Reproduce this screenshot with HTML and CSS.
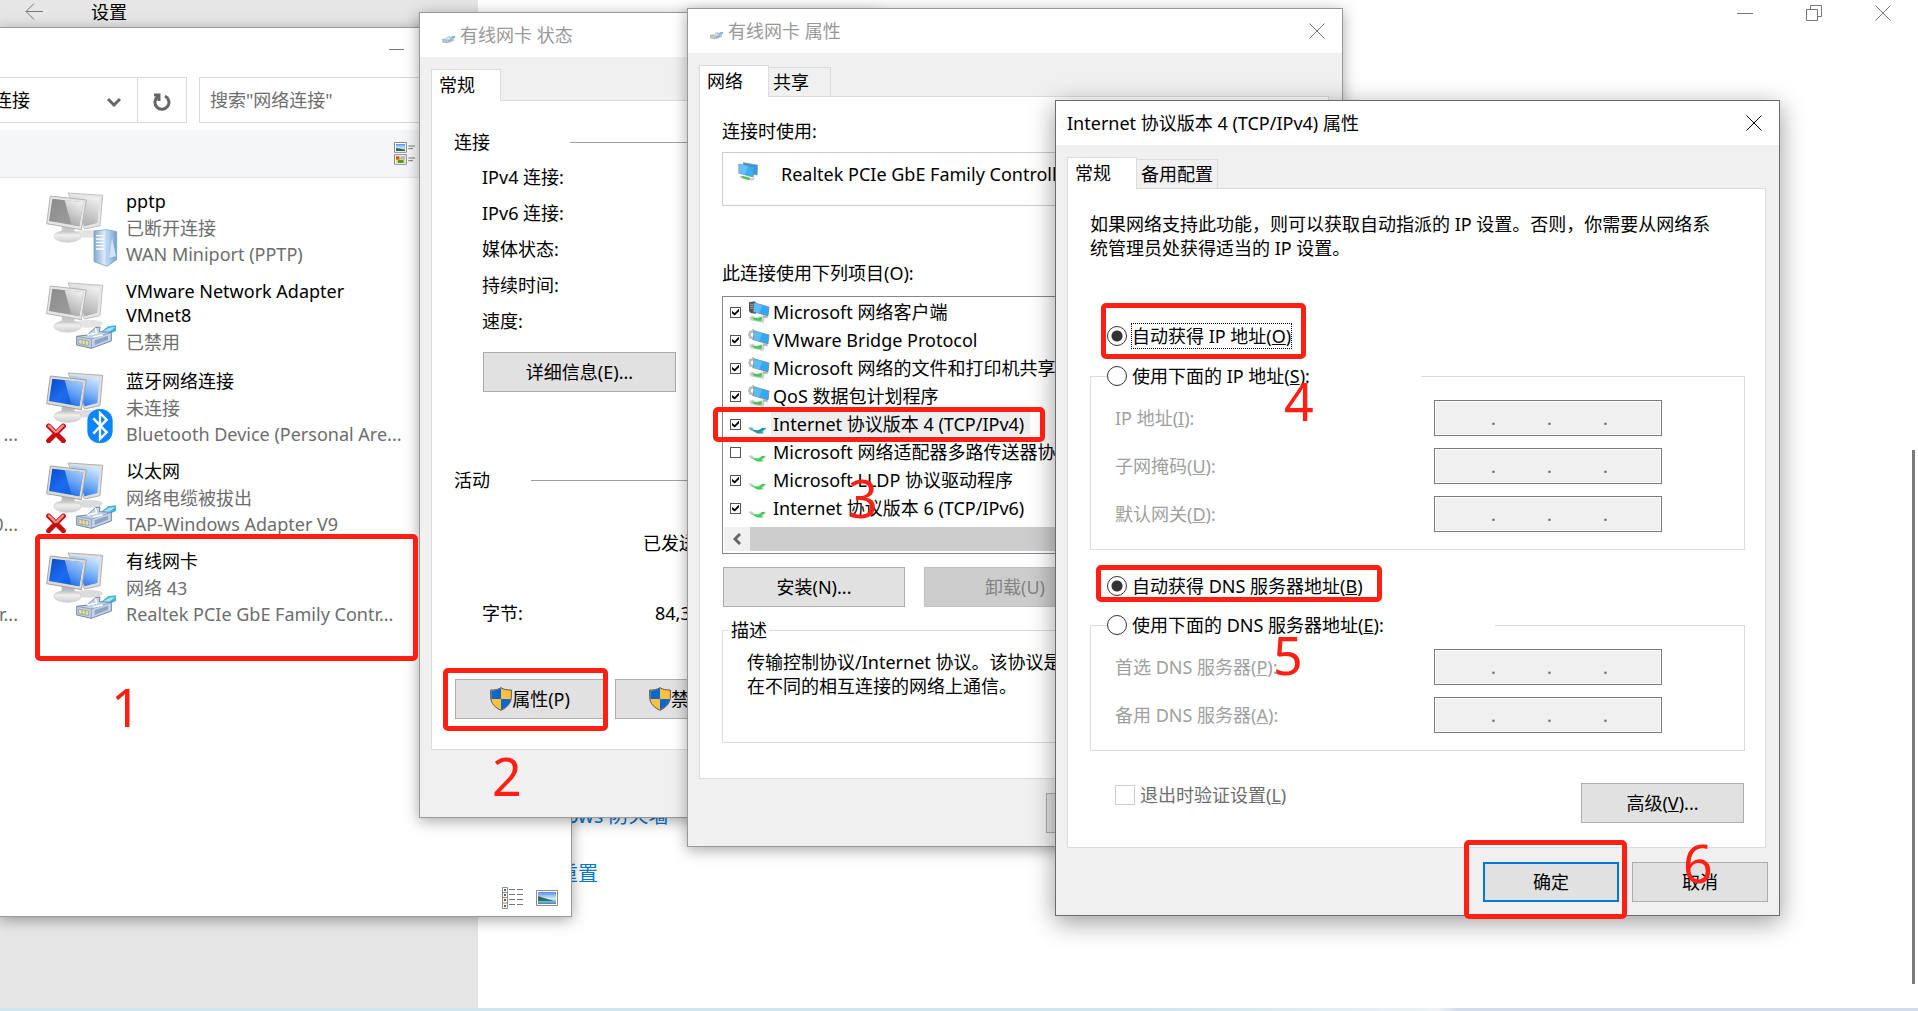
FILE: index.html
```html
<!DOCTYPE html>
<html lang="zh-CN">
  <head>
    <meta charset="UTF-8" />
    <meta name="viewport" content="width=device-width, initial-scale=1.0" />
    <title>设置</title>
    <link rel="stylesheet" href="styles.css">
  </head>
  <body>
    <!-- shared icons -->
    <svg class="sprite" width="0" height="0" aria-hidden="true">
      <defs>
        <linearGradient id="blue-screen" x1="0" y1="0" x2="1" y2="1">
          <stop offset="0" stop-color="#0a49c8" />
          <stop offset="0.5" stop-color="#1c6cf0" />
          <stop offset="1" stop-color="#0a50d0" />
        </linearGradient>
        <linearGradient id="blue-glare" x1="0.7" y1="0" x2="0.3" y2="1">
          <stop offset="0" stop-color="#d3e8fd" />
          <stop offset="0.5" stop-color="#7db4f8" />
          <stop offset="1" stop-color="#1f6cf0" />
        </linearGradient>
        <linearGradient id="gray-screen" x1="0" y1="0" x2="1" y2="1">
          <stop offset="0" stop-color="#8c8c8c" />
          <stop offset="1" stop-color="#a0a0a0" />
        </linearGradient>
        <linearGradient id="gray-glare" x1="0.7" y1="0" x2="0.3" y2="1">
          <stop offset="0" stop-color="#f0f0f0" />
          <stop offset="1" stop-color="#a6a6a6" />
        </linearGradient>
        <linearGradient id="metal" x1="0" y1="0" x2="0" y2="1">
          <stop offset="0" stop-color="#b9b9b9" />
          <stop offset="0.4" stop-color="#efefef" />
          <stop offset="1" stop-color="#cdcdcd" />
        </linearGradient>
        <linearGradient id="tower" x1="0" y1="0" x2="1" y2="0">
          <stop offset="0" stop-color="#7fa9d3" />
          <stop offset="0.45" stop-color="#d9eafa" />
          <stop offset="1" stop-color="#6f9fce" />
        </linearGradient>
        <linearGradient id="sky" x1="0" y1="0" x2="0" y2="1">
          <stop offset="0" stop-color="#4f8ff0" />
          <stop offset="0.55" stop-color="#d4e9fb" />
          <stop offset="1" stop-color="#3d86b8" />
        </linearGradient>
      </defs>

      <symbol id="pc-blue" viewBox="0 0 216 228">
        <ellipse cx="128" cy="128" rx="42" ry="12" fill="#dcdcdc" />
        <path d="M66 6 170 13 162 104 116 114Z" fill="#dedede" stroke="#b0b0b0" stroke-width="3" />
        <path d="M74 14 161 20 154 96 116 106Z" fill="url(#blue-glare)" />
        <path d="M48 106 86 112 84 128H46Z" fill="#b9b9b9" />
        <ellipse cx="65" cy="136" rx="41" ry="18" fill="url(#metal)" stroke="#c6c6c6" stroke-width="2" />
        <path d="M13 15 121 27 106 116 2 98Z" fill="#dcdcd6" stroke="#a2a29e" stroke-width="3" />
        <path d="M19 23 112 34 100 106 9 90Z" fill="url(#blue-screen)" />
        <path d="M56 27 112 34 100 106 76 101Z" fill="url(#blue-glare)" opacity=".75" />
      </symbol>
      <symbol id="pc-gray" viewBox="0 0 216 228">
        <ellipse cx="128" cy="128" rx="42" ry="12" fill="#e4e4e4" />
        <path d="M66 6 170 13 162 104 116 114Z" fill="#e6e6e6" stroke="#c0c0c0" stroke-width="3" />
        <path d="M74 14 161 20 154 96 116 106Z" fill="url(#gray-glare)" />
        <path d="M48 106 86 112 84 128H46Z" fill="#c6c6c6" />
        <ellipse cx="65" cy="136" rx="41" ry="18" fill="url(#metal)" stroke="#d2d2d2" stroke-width="2" />
        <path d="M13 15 121 27 106 116 2 98Z" fill="#e6e6e6" stroke="#b4b4b4" stroke-width="3" />
        <path d="M19 23 112 34 100 106 9 90Z" fill="url(#gray-screen)" />
        <path d="M56 27 112 34 100 106 76 101Z" fill="url(#gray-glare)" />
      </symbol>
      <symbol id="plug" viewBox="0 0 120 72">
        <path d="M74 22 96 4 120 1V18L92 30Z" fill="#43b1d8" />
        <path d="M80 20 100 8 118 6 98 22Z" fill="#a5e4f5" />
        <path d="M2 34 34 30 58 8 72 6 70 20 106 22V48L46 70 2 60Z" fill="#c3d2e6" stroke="#7287a8" stroke-width="3" />
        <path d="M2 34 46 42 106 22M46 42V70" fill="none" stroke="#7287a8" stroke-width="2" />
        <path d="M34 30 62 24 58 10M52 36 80 30" fill="none" stroke="#fff" stroke-width="4" />
        <path d="M56 46 96 32V44L56 60Z" fill="#8fa3c4" />
        <path d="M8 42 38 48V62L8 56Z" fill="#e3e0a4" stroke="#8b92a0" stroke-width="2" />
        <path d="M18 44V58M28 46V60" stroke="#9c9a55" stroke-width="2" />
      </symbol>
      <symbol id="red-x" viewBox="0 0 60 60">
        <path d="M8 8 52 52M52 8 8 52" stroke="#c80c12" stroke-width="15" stroke-linecap="round" />
        <path d="M9 7 28 26M51 7 33 25" stroke="#f48e8e" stroke-width="7" stroke-linecap="round" />
      </symbol>
      <symbol id="shield" viewBox="0 0 66 72">
        <path d="M33 2C25 8 14 9 2 9V32C3 50 16 62 33 70 50 62 63 50 64 32V9C52 9 41 8 33 2Z" fill="#ffc03c" stroke="#57575a" stroke-width="3" />
        <path d="M33 4C25 9 15 11 4 11V36H33ZM33 36H62C59 52 48 62 33 68Z" fill="#0b66cd" />
      </symbol>
      <symbol id="cable" viewBox="0 0 54 26">
        <path d="M0 5 12 3 18 10 10 14ZM38 12 54 3V9L46 14V24L36 20Z" fill="#cfd2d4" />
        <path d="M8 10 30 12 44 5 52 7 40 16 42 22 28 22Z" fill="#39cb4c" />
        <path d="M12 11 30 15 40 10" fill="none" stroke="#8cea94" stroke-width="2" />
      </symbol>
      <symbol id="cable-on" viewBox="0 0 54 26">
        <path d="M0 5 12 3 18 10 10 14ZM38 12 54 3V9L46 14V24L36 20Z" fill="#6daee0" />
        <path d="M8 10 30 12 44 5 52 7 40 16 42 22 28 22Z" fill="#1d9a97" />
      </symbol>
      <symbol id="monitor-sm" viewBox="0 0 66 66">
        <path d="M44 42 58 46 60 52 44 50Z" fill="#b4b8ba" />
        <path d="M18 5 63 18 60 45 16 32Z" fill="#35a8f4" stroke="#6c7b87" stroke-width="2" />
        <path d="M19 6 42 13 34 37 17 32Z" fill="#5dbdf8" />
        <path d="M4 48 14 44 24 50 40 46 50 54 46 66 8 58Z" fill="#c9cdd0" />
        <path d="M12 50 30 52 42 48 40 60 20 58Z" fill="#3ccc4a" />
      </symbol>
      <symbol id="client" viewBox="0 0 66 66">
        <path d="M3 4 20 1 24 5V38L8 36 3 30Z" fill="#4f5357" />
        <path d="M6 10H16M6 16H16M6 22H16" stroke="#c6cacc" stroke-width="2" />
        <use href="#monitor-sm" width="66" height="66" />
      </symbol>
      <symbol id="service" viewBox="0 0 66 66">
        <circle cx="15" cy="17" r="10" fill="none" stroke="#b5bdc4" stroke-width="7" />
        <path d="M15 0V8M15 26V34M0 17H6M4 6 8 10M4 29 8 25" stroke="#b5bdc4" stroke-width="5" />
        <use href="#monitor-sm" width="66" height="66" />
      </symbol>
      <symbol id="adapter" viewBox="0 0 60 58">
        <path d="M16 2 60 10 58 40 16 30Z" fill="#2e9dec" stroke="#77838d" stroke-width="2" />
        <path d="M2 6 48 16 46 46 2 34Z" fill="#3aaef8" stroke="#77838d" stroke-width="2" />
        <path d="M3 7 30 13 20 38 3 33Z" fill="#66c2fa" />
        <path d="M4 42 20 44 40 50 50 48 48 56 30 56 6 48Z" fill="#c4c8ca" />
        <path d="M10 42 36 48 36 55 14 50Z" fill="#41c94c" />
      </symbol>
    </svg>

    <main class="desktop">
      <!-- settings app behind everything -->
      <section class="settings">
        <aside class="settings-side">
          <button class="back" aria-label="返回">
            <svg width="18" height="17" viewBox="0 0 18 17"><path d="M9 0.5 1 8.5 9 16.5M1 8.5H18" /></svg>
          </button>
          <span>设置</span>
        </aside>
        <div class="settings-main">
          <div class="settings-controls">
            <button aria-label="最小化"><svg width="16" height="16" viewBox="0 0 16 16"><path d="M0 8.5H16" /></svg></button>
            <button aria-label="还原"><svg width="16" height="16" viewBox="0 0 16 16"><path d="M.5 4.5H11.5V15.5H.5ZM4.5 4.5V.5H15.5V11.5H11.5" /></svg></button>
            <button aria-label="关闭"><svg width="16" height="16" viewBox="0 0 16 16"><path d="M.5.5 15.5 15.5M15.5.5.5 15.5" /></svg></button>
          </div>
          <nav class="settings-links">
            <a href="#">Windows 防火墙</a>
            <a href="#">网络重置</a>
          </nav>
        </div>
        <div class="settings-scroll"></div>
      </section>
      <div class="taskbar-edge"></div>

      <!-- network connections -->
      <section class="window connections">
        <header class="connections-title">
          <button aria-label="最小化"><svg width="16" height="16" viewBox="0 0 16 16"><path d="M0 7.5H15" /></svg></button>
        </header>
        <div class="address-row">
          <div class="address">
            <span class="address-text">连接</span>
            <button aria-label="展开"><svg width="14" height="10" viewBox="0 0 14 10"><path class="thick" d="M1 2 7 8 13 2" /></svg></button>
            <button class="refresh" aria-label="刷新">
              <svg width="18" height="18" viewBox="0 0 18 18"><path class="thick" d="M12 3A7 7 0 1 1 5 3.500M1 2H6V8" /></svg>
            </button>
          </div>
          <input class="search" type="text" aria-label="搜索" placeholder='搜索"网络连接"' />
        </div>
        <div class="toolbar">
          <button aria-label="更改视图">
            <svg width="21" height="23" viewBox="0 0 63 69">
              <path d="M1.500 1.500H37V31H1.500ZM1.500 38H37V67H1.500Z" fill="#fff" stroke="#888" stroke-width="3" />
              <path d="M6 6H33V27H6Z" fill="url(#sky)" /><path d="M6 18 20 20 33 24V27H6Z" fill="#2d6a5e" />
              <path d="M6 43H33V63H6Z" fill="#f3d65a" /><path d="M6 43H16V53H6Z" fill="#d8502f" /><path d="M12 54H28V63H12Z" fill="#4b9a3c" /><path d="M20 43H33V52H20Z" fill="#9cb9f0" />
              <path d="M43 12H63M43 20H57M43 48H63M43 56H57" stroke="#777" stroke-width="3" />
            </svg>
          </button>
        </div>
        <div class="connection-columns">
          <ul class="previous-column">
            <li></li>
            <li></li>
            <li>...</li>
            <li>0...</li>
            <li>r...</li>
          </ul>
          <ul class="connection-list">
            <li>
              <svg class="pc" viewBox="0 0 216 228">
                <use href="#pc-gray" />
                <path d="M144 120 182 116 212 122V206L184 226 144 212Z" fill="url(#tower)" stroke="#6d97c2" stroke-width="2" />
                <path d="M182 118V224" stroke="#a9c8e6" stroke-width="2" />
                <path d="M150 134H174M150 144H174M150 154H174M150 164H174M150 174H174" stroke="#fff" stroke-width="4" />
                <path d="M190 200 198 140 210 196Z" fill="#cfe4f8" />
              </svg>
              <div>
                <strong>pptp</strong>
                <span>已断开连接</span>
                <span>WAN Miniport (PPTP)</span>
              </div>
            </li>
            <li>
              <svg class="pc" viewBox="0 0 216 228">
                <use href="#pc-gray" />
                <use href="#plug" x="90" y="132" width="120" height="72" />
              </svg>
              <div>
                <strong>VMware Network Adapter VMnet8</strong>
                <span>已禁用</span>
              </div>
            </li>
            <li>
              <svg class="pc" viewBox="0 0 216 228">
                <use href="#pc-blue" />
                <use href="#red-x" y="157" width="60" height="60" />
                <rect x="124" y="114" width="76" height="102" rx="36" fill="#0a84ff" />
                <path d="M142 142 182 184 162 204V126L182 146 142 188" fill="none" stroke="#fff" stroke-width="7" />
              </svg>
              <div>
                <strong>蓝牙网络连接</strong>
                <span>未连接</span>
                <span>Bluetooth Device (Personal Are...</span>
              </div>
            </li>
            <li>
              <svg class="pc" viewBox="0 0 216 228">
                <use href="#pc-blue" />
                <use href="#red-x" y="157" width="60" height="60" />
                <use href="#plug" x="90" y="132" width="120" height="72" />
              </svg>
              <div>
                <strong>以太网</strong>
                <span>网络电缆被拔出</span>
                <span>TAP-Windows Adapter V9</span>
              </div>
            </li>
            <li>
              <svg class="pc" viewBox="0 0 216 228">
                <use href="#pc-blue" />
                <use href="#plug" x="90" y="132" width="120" height="72" />
              </svg>
              <div>
                <strong>有线网卡</strong>
                <span>网络 43</span>
                <span>Realtek PCIe GbE Family Contr...</span>
              </div>
            </li>
          </ul>
        </div>
        <footer class="view-switch">
          <button aria-label="详细信息">
            <svg width="22" height="22" viewBox="0 0 22 22">
              <path d="M.5.5H5.500V21.500H.5ZM.5 5.500H5.500M.5 10.500H5.500M.5 16H5.500" fill="#fff" stroke="#8a8a8a" />
              <path d="M2 2H4V4H2ZM2 7H4V9H2ZM2 18H4V20H2Z" fill="#4b6b62" /><path d="M2 12H4V14H2Z" fill="#c0392b" />
              <path d="M7 2.500H13M15 2.500H21M7 7.500H13M15 7.500H21M7 12.500H13M15 12.500H21M7 17.500H13M15 17.500H21" stroke="#777" />
            </svg>
          </button>
          <button aria-label="大图标">
            <svg width="22" height="16" viewBox="0 0 22 16">
              <path d="M.5.5H21.500V15.500H.5Z" fill="#fff" stroke="#8a8a8a" />
              <path d="M2 2H20V14H2Z" fill="url(#sky)" /><path d="M2 6 8 8 18 11H2Z" fill="#2f6f57" />
            </svg>
          </button>
        </footer>
      </section>

      <!-- adapter status -->
      <section class="window dialog status">
        <header class="dialog-title">
          <svg class="title-icon" viewBox="0 0 120 72"><use href="#plug" /></svg>
          <h2>有线网卡 状态</h2>
        </header>
        <div class="tabs"><button class="tab active">常规</button></div>
        <div class="panel">
          <h3 class="section-line wide">连接</h3>
          <ul class="status-list">
            <li>IPv4 连接:</li>
            <li>IPv6 连接:</li>
            <li>媒体状态:</li>
            <li>持续时间:</li>
            <li>速度:</li>
          </ul>
          <button class="btn details">详细信息(E)...</button>
          <h3 class="section-line activity">活动</h3>
          <div class="sent">已发送</div>
          <div class="bytes"><span>字节:</span><span>84,356</span></div>
          <div class="status-buttons">
            <button class="btn"><svg width="22" height="24"><use href="#shield" /></svg>属性(P)</button>
            <button class="btn"><svg width="22" height="24"><use href="#shield" /></svg>禁用(D)</button>
          </div>
        </div>
        <footer class="dialog-footer"><button class="btn">关闭(C)</button></footer>
      </section>

      <!-- adapter properties -->
      <section class="window dialog properties">
        <header class="dialog-title">
          <svg class="title-icon" viewBox="0 0 120 72"><use href="#plug" /></svg>
          <h2>有线网卡 属性</h2>
          <button class="close" aria-label="关闭"><svg width="16" height="16" viewBox="0 0 16 16"><path d="M.5.5 15.5 15.5M15.5.5.5 15.5" /></svg></button>
        </header>
        <div class="tabs">
          <button class="tab active">网络</button>
          <button class="tab">共享</button>
        </div>
        <div class="panel">
          <p>连接时使用:</p>
          <div class="adapter-box">
            <svg width="20" height="19" viewBox="0 0 60 58"><use href="#adapter" /></svg>
            <span>Realtek PCIe GbE Family Controller</span>
          </div>
          <p>此连接使用下列项目(O):</p>
          <div class="item-list">
            <label><input type="checkbox" checked /><svg><use href="#client" /></svg><span>Microsoft 网络客户端</span></label>
            <label><input type="checkbox" checked /><svg><use href="#service" /></svg><span>VMware Bridge Protocol</span></label>
            <label><input type="checkbox" checked /><svg><use href="#service" /></svg><span>Microsoft 网络的文件和打印机共享</span></label>
            <label><input type="checkbox" checked /><svg><use href="#service" /></svg><span>QoS 数据包计划程序</span></label>
            <label><input type="checkbox" checked /><svg class="proto"><use href="#cable-on" /></svg><span class="selected">Internet 协议版本 4 (TCP/IPv4)</span></label>
            <label><input type="checkbox" /><svg class="proto"><use href="#cable" /></svg><span>Microsoft 网络适配器多路传送器协议</span></label>
            <label><input type="checkbox" checked /><svg class="proto"><use href="#cable" /></svg><span>Microsoft LLDP 协议驱动程序</span></label>
            <label><input type="checkbox" checked /><svg class="proto"><use href="#cable" /></svg><span>Internet 协议版本 6 (TCP/IPv6)</span></label>
            <div class="h-scroll">
              <button aria-label="向左滚动"><svg width="8" height="12" viewBox="0 0 8 12"><path class="thick" d="M7 1 2 6 7 11" /></svg></button>
              <div class="h-thumb"></div>
            </div>
          </div>
          <div class="item-buttons">
            <button class="btn">安装(N)...</button>
            <button class="btn" disabled>卸载(U)</button>
          </div>
          <fieldset class="description">
            <legend>描述</legend>
            <p>传输控制协议/Internet 协议。该协议是<br />在不同的相互连接的网络上通信。</p>
          </fieldset>
        </div>
        <footer class="dialog-footer">
          <button class="btn">确定</button>
          <button class="btn">取消</button>
        </footer>
      </section>

      <!-- ipv4 properties -->
      <section class="window dialog ipv4">
        <header class="dialog-title">
          <h2>Internet 协议版本 4 (TCP/IPv4) 属性</h2>
          <button class="close" aria-label="关闭"><svg width="16" height="16" viewBox="0 0 16 16"><path d="M.5.5 15.5 15.5M15.5.5.5 15.5" /></svg></button>
        </header>
        <div class="tabs">
          <button class="tab active">常规</button>
          <button class="tab">备用配置</button>
        </div>
        <div class="panel">
          <p>如果网络支持此功能，则可以获取自动指派的 IP 设置。否则，你需要从网络系<br />统管理员处获得适当的 IP 设置。</p>
          <label class="radio first"><input type="radio" name="ip" checked /><span class="focused">自动获得 IP 地址(<u>O</u>)</span></label>
          <fieldset class="group">
            <legend class="ip-legend"><label class="radio"><input type="radio" name="ip" /><span>使用下面的 IP 地址(<u>S</u>):</span></label></legend>
            <div class="field-row">
              <label for="ip-1">IP 地址(<u>I</u>):</label>
              <div class="ip-field"><input id="ip-1" disabled /><i>.</i><input aria-label="IP 2" disabled /><i>.</i><input aria-label="IP 3" disabled /><i>.</i><input aria-label="IP 4" disabled /></div>
            </div>
            <div class="field-row">
              <label for="mask-1">子网掩码(<u>U</u>):</label>
              <div class="ip-field"><input id="mask-1" disabled /><i>.</i><input aria-label="掩码 2" disabled /><i>.</i><input aria-label="掩码 3" disabled /><i>.</i><input aria-label="掩码 4" disabled /></div>
            </div>
            <div class="field-row">
              <label for="gateway-1">默认网关(<u>D</u>):</label>
              <div class="ip-field"><input id="gateway-1" disabled /><i>.</i><input aria-label="网关 2" disabled /><i>.</i><input aria-label="网关 3" disabled /><i>.</i><input aria-label="网关 4" disabled /></div>
            </div>
          </fieldset>
          <label class="radio second"><input type="radio" name="dns" checked /><span>自动获得 DNS 服务器地址(<u>B</u>)</span></label>
          <fieldset class="group">
            <legend class="dns-legend"><label class="radio"><input type="radio" name="dns" /><span>使用下面的 DNS 服务器地址(<u>E</u>):</span></label></legend>
            <div class="field-row">
              <label for="dns-1">首选 DNS 服务器(<u>P</u>):</label>
              <div class="ip-field"><input id="dns-1" disabled /><i>.</i><input aria-label="首选 2" disabled /><i>.</i><input aria-label="首选 3" disabled /><i>.</i><input aria-label="首选 4" disabled /></div>
            </div>
            <div class="field-row">
              <label for="alt-1">备用 DNS 服务器(<u>A</u>):</label>
              <div class="ip-field"><input id="alt-1" disabled /><i>.</i><input aria-label="备用 2" disabled /><i>.</i><input aria-label="备用 3" disabled /><i>.</i><input aria-label="备用 4" disabled /></div>
            </div>
          </fieldset>
          <div class="advanced-row">
            <label class="validate"><input type="checkbox" disabled />退出时验证设置(<u>L</u>)</label>
            <button class="btn advanced">高级(<u>V</u>)...</button>
          </div>
        </div>
        <footer class="dialog-footer">
          <button class="btn primary">确定</button>
          <button class="btn">取消</button>
        </footer>
      </section>

      <!-- step markers -->
      <div class="mark mark-1"></div>
      <div class="mark mark-2"></div>
      <div class="mark mark-3"></div>
      <div class="mark mark-4"></div>
      <div class="mark mark-5"></div>
      <div class="mark mark-6"></div>
      <span class="step step-1">1</span>
      <span class="step step-2">2</span>
      <span class="step step-3">3</span>
      <span class="step step-4">4</span>
      <span class="step step-5">5</span>
      <span class="step step-6">6</span>
    </main>
  </body>
</html>
```
FILE: styles.css
```css
* {
  box-sizing: border-box;
}

body {
  margin: 0;
  font-family: "Noto Sans", "Noto Sans CJK SC", sans-serif;
  font-size: 18px;
  line-height: 24px;
  color: #000;
  background: #fff;
}

h2,
h3,
p,
ul,
fieldset {
  margin: 0;
  padding: 0;
  font-size: 18px;
  font-weight: normal;
}

ul {
  list-style: none;
}

button,
input {
  font: inherit;
  color: inherit;
  margin: 0;
}

button {
  padding: 0;
  border: none;
  background: none;
}

button svg,
label svg {
  flex: none;
}

button path {
  fill: none;
  stroke: #777;
}

button path[fill] {
  fill: revert-layer;
  stroke: revert-layer;
}

button path.thick {
  stroke: #666;
  stroke-width: 3;
}

.sprite {
  position: absolute;
}

.desktop {
  position: relative;
  height: 100vh;
  overflow: hidden;
}

/* settings */
.settings {
  display: flex;
  height: 100%;
}

.settings-side {
  display: flex;
  align-items: flex-start;
  gap: 48px;
  width: 478px;
  padding-left: 25px;
  background: #e6e6e6;
}

.back {
  display: flex;
  padding-top: 3px;
}

.settings-main {
  flex: 1;
  display: flex;
  flex-direction: column;
}

.settings-controls {
  display: flex;
  justify-content: flex-end;
  gap: 53px;
  padding: 5px 21px 0 0;
}

.settings-controls button {
  display: flex;
}

.settings-links {
  display: flex;
  flex-direction: column;
  gap: 34px;
  padding: 783px 0 0 40px;
  font-size: 20px;
}

.settings-links a {
  color: #0078d7;
  text-decoration: none;
}

.settings-scroll {
  width: 3px;
  margin: 450px 3px 27px 0;
  background: #7a7a7a;
}

.taskbar-edge {
  position: absolute;
  left: 0;
  right: 0;
  bottom: 0;
  height: 3px;
  background: linear-gradient(to right, #cfe6ed 0 60%, #ecf2f5 75%, #d2dcea 76%);
}

/* windows */
.window {
  position: absolute;
  border: 1px solid #999;
  box-shadow: 0 3px 14px rgba(0, 0, 0, 0.35);
}

.connections {
  top: 27px;
  left: -1px;
  bottom: 94px;
  width: 573px;
  display: flex;
  flex-direction: column;
  background: #fff;
}

.connections-title {
  display: flex;
  align-items: center;
  height: 44px;
  padding-left: 389px;
}

.connections-title button {
  display: flex;
}

.address-row {
  display: flex;
  gap: 12px;
  height: 46px;
  margin: 5px 12px 7px 0;
}

.address {
  display: flex;
  width: 187px;
  border: 1px solid #d9d9d9;
  border-left: none;
}

.address-text {
  flex: 1;
  margin-left: -6px;
  line-height: 44px;
}

.address button {
  width: 46px;
}

.address .refresh {
  width: 49px;
  border-left: 1px solid #d9d9d9;
}

.address button svg {
  vertical-align: middle;
}

.search {
  flex: 1;
  padding: 0 10px;
  border: 1px solid #d9d9d9;
  background: #fff;
}

.search::placeholder {
  color: #6d6d6d;
  opacity: 1;
}

.toolbar {
  display: flex;
  align-items: center;
  height: 48px;
  padding-left: 394px;
  border-bottom: 1px solid #e5e7e9;
  background: #f5f6f8;
}

.toolbar button,
.view-switch button {
  display: flex;
}

.connection-columns {
  display: flex;
  gap: 28px;
  padding-top: 11px;
  color: #6d6d6d;
}

.previous-column {
  width: 18px;
}

.previous-column li {
  display: flex;
  justify-content: flex-end;
  height: 90px;
  padding-top: 53px;
}

.connection-list li {
  display: flex;
  gap: 8px;
  height: 90px;
  width: 366px;
}

.connection-list span,
.connection-list strong {
  display: block;
  white-space: nowrap;
  line-height: 26px;
}

.connection-list strong {
  margin-bottom: 2px;
  white-space: normal;
  line-height: 24px;
  font-weight: normal;
  color: #000;
}

.pc {
  flex: none;
  width: 72px;
  height: 76px;
  margin-top: 2px;
}

.view-switch {
  display: flex;
  align-items: center;
  justify-content: flex-end;
  gap: 12px;
  margin-top: auto;
  padding: 0 13px 7px;
}

/* dialogs */
.dialog {
  background: #f0f0f0;
}

.dialog-title {
  display: flex;
  align-items: center;
  height: 44px;
  padding: 0 17px 0 22px;
  background: #fff;
  color: #999;
}

.title-icon {
  width: 13px;
  height: 13px;
  margin: 8px 5px 0 0;
}

.close {
  display: flex;
  margin-left: auto;
}

.tabs {
  display: flex;
  align-items: flex-end;
  padding: 12px 11px 0;
}

.tab {
  min-width: 62px;
  height: 29px;
  padding: 0 4px;
  border: 1px solid #dcdcdc;
  border-width: 1px 1px 0 0;
  text-align: left;
}

.tab.active {
  position: relative;
  width: 70px;
  height: 32px;
  margin-bottom: -1px;
  padding: 0 7px 2px;
  border-width: 1px 1px 0 1px;
  background: #fff;
}

.panel {
  margin: 0 13px 0 11px;
  padding: 22px;
  border: 1px solid #dcdcdc;
  background: #fff;
}

.dialog-footer {
  display: flex;
  justify-content: flex-end;
  gap: 13px;
  padding: 14px 11px 13px;
}

.btn {
  display: flex;
  align-items: center;
  justify-content: center;
  width: 136px;
  height: 40px;
  border: 1px solid #adadad;
  background: #e1e1e1;
}

.btn:disabled {
  border-color: #bfbfbf;
  background: #ccc;
  color: #838383;
}

.btn.primary {
  border: 2px solid #0078d7;
}

/* adapter status */
.status {
  top: 12px;
  left: 419px;
  width: 460px;
}

.status .panel {
  padding: 29px 22px 30px;
}

.section-line {
  display: flex;
  align-items: center;
  gap: 80px;
}

.section-line::after {
  content: "";
  flex: 1;
  border-top: 1px solid #a0a0a0;
}

.section-line.activity {
  gap: 41px;
  margin-top: 76px;
}

.status-list {
  margin: 5px 0 13px 28px;
  line-height: 36px;
}

.details {
  width: 193px;
  margin-left: 29px;
}

.sent {
  margin: 39px 0 0 189px;
}

.bytes {
  display: grid;
  grid-template-columns: 173px 1fr;
  margin: 46px 0 54px 28px;
}

.status-buttons {
  display: flex;
  gap: 10px;
  padding-left: 1px;
}

.status-buttons .btn {
  width: 150px;
}

/* adapter properties */
.properties {
  top: 8px;
  left: 687px;
  width: 656px;
}

.properties .panel {
  padding-bottom: 35px;
}

.adapter-box {
  display: flex;
  align-items: flex-start;
  gap: 23px;
  height: 54px;
  margin: 9px 0 55px;
  padding: 9px 15px;
  border: 1px solid #ccc;
}

.item-list {
  margin: 11px 0 13px;
  padding: 1px 1px 2px;
  border: 1px solid #828790;
}

.item-list label {
  display: flex;
  align-items: center;
  height: 28px;
  padding-left: 6px;
  white-space: nowrap;
}

.item-list svg {
  width: 22px;
  height: 22px;
  margin: 0 1px 0 7px;
}

.item-list svg.proto {
  width: 18px;
  height: 9px;
  margin: 13px 5px 0 7px;
}

.item-list label span {
  padding: 0 2px;
}

.item-list .selected {
  padding-right: 6px;
  background: #eee;
}

input[type="checkbox"] {
  appearance: none;
  display: flex;
  align-items: center;
  justify-content: center;
  width: 11px;
  height: 11px;
  border: 1px solid #555;
  background: #fff;
}

input[type="checkbox"]:checked::before {
  content: "";
  width: 7px;
  height: 7px;
  background: #000;
  clip-path: polygon(0 35%, 40% 65%, 100% 0, 100% 40%, 40% 100%, 0 70%);
}

.h-scroll {
  display: flex;
  height: 24px;
  margin-top: 5px;
}

.h-scroll button {
  display: flex;
  align-items: center;
  justify-content: center;
  width: 26px;
  background: #f0f0f0;
}

.item-list .h-scroll svg {
  width: 8px;
  height: 12px;
  margin: 0;
}

.h-scroll .h-thumb {
  flex: 1;
  background: #cdcdcd;
}

.item-buttons {
  display: flex;
  gap: 19px;
  margin-bottom: 11px;
  padding-left: 1px;
}

.item-buttons .btn {
  width: 182px;
}

fieldset {
  min-width: 0;
  border: 1px solid #dcdcdc;
}

.description {
  padding: 8px 6px 44px;
}

.description legend {
  padding: 0 2px;
}

.description p {
  padding-left: 18px;
  white-space: nowrap;
}

/* ipv4 properties */
.ipv4 {
  top: 100px;
  left: 1055px;
  width: 725px;
  border-color: #6b6b6b;
  box-shadow: 0 6px 24px rgba(0, 0, 0, 0.4);
}

.ipv4 .dialog-title {
  padding-left: 11px;
  color: #000;
}

.ipv4 .close path {
  stroke: #000;
}

.ipv4 .panel {
  padding: 23px 20px 24px 22px;
}

.ipv4 p {
  white-space: nowrap;
}

.radio {
  display: flex;
  align-items: center;
  gap: 5px;
}

.radio.first {
  margin: 64px 0 16px 17px;
}

.radio.second {
  margin: 24px 0 15px 17px;
}

input[type="radio"] {
  appearance: none;
  flex: none;
  width: 20px;
  height: 20px;
  border: 1px solid #333;
  border-radius: 50%;
  background: #fff;
}

input[type="radio"]:checked {
  background: radial-gradient(circle, #333 5px, #fff 6px);
}

.focused {
  outline: 1px dotted #000;
}

.group {
  padding: 12px 82px 17px 16px;
}

.group legend {
  padding: 0;
}

.ip-legend {
  width: 314px;
}

.dns-legend {
  width: 388px;
}

.field-row {
  display: flex;
  align-items: center;
  justify-content: space-between;
  padding-left: 8px;
  color: #a0a0a0;
}

.field-row + .field-row {
  margin-top: 12px;
}

.ip-field {
  display: flex;
  align-items: center;
  height: 36px;
  padding: 0 2px 0 4px;
  border: 1px solid #7a7a7a;
  box-shadow: inset 0 0 0 1px #fff;
  background: #f0f0f0;
  color: #6d6d6d;
}

.ip-field input {
  width: 52px;
  height: 24px;
  padding: 0;
  border: none;
  background: none;
}

.ip-field i {
  width: 4px;
  font-style: normal;
}

.advanced-row {
  display: flex;
  justify-content: space-between;
  align-items: flex-start;
  margin-top: 32px;
  padding-right: 1px;
}

.validate {
  display: flex;
  align-items: center;
  padding-left: 25px;
  color: #6d6d6d;
}

.validate input[type="checkbox"] {
  width: 20px;
  height: 20px;
  margin-right: 5px;
  border-color: #ccc;
}

.advanced {
  width: 163px;
}

/* step markers */
.mark {
  position: absolute;
  border: 5px solid #ff2013;
  border-radius: 5px;
}

.mark-1 { left: 35px; top: 534px; width: 383px; height: 127px; }
.mark-2 { left: 443px; top: 668px; width: 165px; height: 63px; }
.mark-3 { left: 713px; top: 407px; width: 332px; height: 35px; }
.mark-4 { left: 1101px; top: 303px; width: 205px; height: 56px; }
.mark-5 { left: 1096px; top: 565px; width: 286px; height: 37px; }
.mark-6 { left: 1464px; top: 840px; width: 163px; height: 79px; }

.step {
  position: absolute;
  font-size: 52px;
  line-height: 60px;
  color: #ff2013;
}

.step-1 { left: 111px; top: 677px; }
.step-2 { left: 492px; top: 746px; }
.step-3 { left: 848px; top: 468px; }
.step-4 { left: 1284px; top: 371px; }
.step-5 { left: 1273px; top: 625px; }
.step-6 { left: 1683px; top: 833px; }
```
